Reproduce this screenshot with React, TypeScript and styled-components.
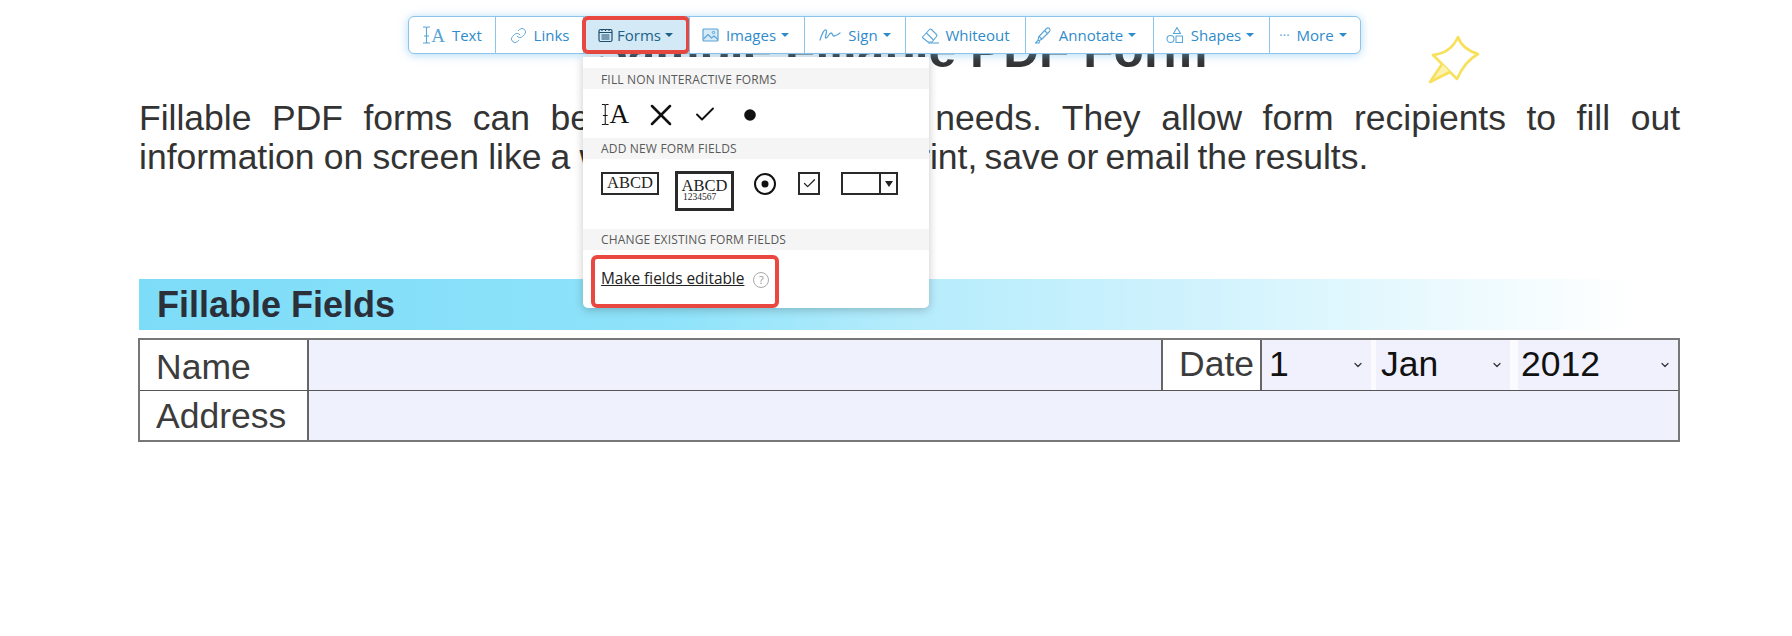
import React from "react";
import styled, { createGlobalStyle } from "styled-components";
import { Link, ChevronDown, Check, X } from "lucide-react";

const GlobalStyle = createGlobalStyle`
  html, body {
    margin: 0;
    background: #fff;
  }
  body {
    font-family: "Liberation Sans", Arial, sans-serif;
  }
`;

const Page = styled.div`
  position: relative;
  width: 1792px;
  height: 636px;
  overflow: hidden;
  box-sizing: border-box;
  padding: 23px 112px 0 139px;
  color: #333;
`;

const Title = styled.h1`
  margin: 0;
  padding-right: 17px;
  font-size: 49.7px;
  line-height: 54px;
  font-weight: bold;
  text-align: center;
`;

const Paragraph = styled.div`
  margin-top: 22px;
  font-size: 35.5px;
  line-height: 39px;
  word-spacing: -0.7px;
`;

const ParaLine = styled.div<{ $justify?: boolean }>`
  white-space: ${(p) => (p.$justify ? "normal" : "nowrap")};
  text-align: ${(p) => (p.$justify ? "justify" : "left")};
  text-align-last: ${(p) => (p.$justify ? "justify" : "left")};
`;

const TightWords = styled.span`
  word-spacing: -2.7px;
`;

const Banner = styled.div`
  margin-top: 102px;
  height: 51px;
  padding-left: 18px;
  display: flex;
  align-items: center;
  font-size: 36px;
  font-weight: bold;
  color: #2b2f3a;
  background: linear-gradient(90deg, #7ddcf8 0%, #8fe3fa 35%, #b5ecfc 50%, #d2f3fd 70%, #ffffff 97%);
`;

const FormTable = styled.div`
  margin: 8px 0 0 -1px;
  border: 2px solid #777;
  box-sizing: border-box;
  height: 104px;
  display: flex;
  flex-direction: column;
`;

const TableRow = styled.div<{ $first?: boolean }>`
  flex: 1;
  display: flex;
  min-height: 0;
  border-bottom: ${(p) => (p.$first ? "1px solid #555" : "none")};
`;

const Label = styled.div<{ $w: number; $top?: number }>`
  width: ${(p) => p.$w}px;
  flex: none;
  box-sizing: border-box;
  display: flex;
  align-items: center;
  padding: ${(p) => p.$top ?? 0}px 0 0 16px;
  font-size: 35.5px;
  color: #3c3c3c;
  background: #fff;
  border-right: 2px solid #666;
`;

const FieldFill = styled.div`
  flex: 1;
  background: #eff1fd;
  border-right: 2px solid #666;
  &:last-child {
    border-right: none;
  }
`;

const SelectBox = styled.div<{ $w: number; $pad: number }>`
  width: ${(p) => p.$w}px;
  flex: none;
  box-sizing: border-box;
  padding: 0 7px 0 ${(p) => p.$pad}px;
  display: flex;
  align-items: center;
  justify-content: space-between;
  font-size: 35.5px;
  color: #111;
  background: #f0f1fd;
  svg {
    color: #333;
  }
`;

const SelectGap = styled.div<{ $w: number }>`
  width: ${(p) => p.$w}px;
  flex: none;
  background: #fbfbff;
`;

const Toolbar = styled.div`
  position: absolute;
  left: 408px;
  top: 16px;
  width: 953px;
  height: 38px;
  box-sizing: border-box;
  display: flex;
  background: #fff;
  border: 1px solid #8cc4ea;
  border-radius: 6px;
  box-shadow: 0 1px 10px rgba(110, 185, 240, 0.55);
  font-family: "Open Sans", sans-serif;
  font-size: 15px;
  color: #2f8bcb;
`;

const ToolButton = styled.div<{ $w: number; $active?: boolean; $gap?: number; $pr?: number }>`
  position: relative;
  width: ${(p) => p.$w}px;
  flex: none;
  box-sizing: border-box;
  padding-right: ${(p) => p.$pr ?? 0}px;
  display: flex;
  align-items: center;
  justify-content: center;
  gap: ${(p) => p.$gap ?? 7}px;
  border-left: 1px solid #8cc4ea;
  background: ${(p) => (p.$active ? "#d3e9f6" : "transparent")};
  color: ${(p) => (p.$active ? "#1d6288" : "inherit")};
  &:first-child {
    border-left: none;
  }
  svg {
    flex: none;
    color: ${(p) => (p.$active ? "#1d4f6e" : "#5aa5d8")};
  }
`;

const RedOutline = styled.div`
  position: absolute;
  inset: -1px -1px -1px -2px;
  border: 4px solid #e8483f;
  border-radius: 6px;
  pointer-events: none;
`;

const Caret = styled.span<{ $ml: number }>`
  display: inline-block;
  margin-left: ${(p) => p.$ml}px;
  border-left: 4.5px solid transparent;
  border-right: 4.5px solid transparent;
  border-top: 4.5px solid currentColor;
`;

const ThinA = styled.span<{ $size: number }>`
  font-family: "Liberation Serif", serif;
  font-size: ${(p) => p.$size}px;
  line-height: 1;
`;

const IaIcon = styled.span`
  display: inline-flex;
  align-items: center;
  color: #5aa5d8;
`;

const MoreDots = styled.span`
  font-size: 13px;
  color: #5aa5d8;
`;

const Menu = styled.div`
  position: absolute;
  left: 583px;
  top: 57px;
  width: 346px;
  height: 251px;
  box-sizing: border-box;
  padding-top: 11px;
  background: #fff;
  border-radius: 0 0 5px 5px;
  box-shadow: 0 2px 10px rgba(0, 0, 0, 0.22);
  font-family: "Open Sans", sans-serif;
`;

const MenuHeader = styled.div<{ $lower?: boolean }>`
  height: 21px;
  box-sizing: border-box;
  padding: ${(p) => (p.$lower ? 1 : 0)}px 0 0 18px;
  display: flex;
  align-items: center;
  background: #f5f5f5;
  font-size: 12px;
  color: #595959;
  letter-spacing: 0.17px;
`;

const MarkRow = styled.div`
  height: 49px;
  box-sizing: border-box;
  padding: 2px 0 0 18px;
  display: flex;
  align-items: center;
  color: #111;
`;

const MarkSlot = styled.div<{ $w: number; $ml?: number }>`
  width: ${(p) => p.$w}px;
  margin-left: ${(p) => p.$ml ?? 0}px;
  flex: none;
  display: flex;
  align-items: center;
  justify-content: center;
`;

const FieldRow = styled.div`
  height: 70px;
  box-sizing: border-box;
  display: flex;
  align-items: flex-start;
  padding: 13px 0 0 18px;
  color: #111;
`;

const FieldBox = styled.div<{ $w: number; $h: number; $ml: number; $bold?: boolean }>`
  width: ${(p) => p.$w}px;
  height: ${(p) => p.$h}px;
  margin-left: ${(p) => p.$ml}px;
  margin-top: ${(p) => (p.$bold ? -1 : 0)}px;
  padding-top: ${(p) => (p.$bold ? 3 : 0)}px;
  flex: none;
  box-sizing: border-box;
  border: ${(p) => (p.$bold ? 3 : 2)}px solid #2a2a2a;
  font-family: "Liberation Serif", serif;
  color: #222;
  display: flex;
  flex-direction: column;
  align-items: center;
  svg {
    margin-top: 2px;
  }
`;

const AbcdText = styled.span`
  font-size: 16.5px;
  line-height: 18px;
`;

const DigitText = styled.span`
  font-size: 9.5px;
  line-height: 8px;
  align-self: flex-start;
  margin: -2px 0 0 5px;
`;

const ComboBox = styled.div`
  margin-left: 21px;
  width: 57px;
  height: 23px;
  box-sizing: border-box;
  border: 2px solid #2a2a2a;
  display: flex;
  justify-content: flex-end;
`;

const ComboArrow = styled.div`
  width: 15px;
  border-left: 2px solid #2a2a2a;
  display: flex;
  align-items: center;
  justify-content: center;
  &::after {
    content: "";
    border-left: 4px solid transparent;
    border-right: 4px solid transparent;
    border-top: 6px solid #222;
  }
`;

const LinkRow = styled.div`
  height: 59px;
  box-sizing: border-box;
  padding: 19px 0 0 18px;
  display: flex;
  align-items: flex-start;
  gap: 9px;
  font-size: 15.4px;
  line-height: 20px;
  color: #222;
`;

const EditLink = styled.span`
  text-decoration: underline;
`;

const HelpMark = styled.span`
  width: 14px;
  height: 14px;
  margin-top: 3px;
  border: 1px solid #aaa;
  border-radius: 50%;
  font-size: 11px;
  line-height: 14px;
  text-align: center;
  color: #999;
`;

const LinkOutline = styled.div`
  position: absolute;
  left: 8px;
  top: 198px;
  width: 188px;
  height: 53px;
  box-sizing: border-box;
  border: 4px solid #e8483f;
  border-radius: 6px;
`;

const PinMark = styled.svg`
  position: absolute;
  left: 1415px;
  top: 25px;
`;

function IBeam({ h }: { h: number }) {
  return (
    <svg width="9" height={h} viewBox={`0 0 9 ${h}`} fill="none" stroke="currentColor" strokeWidth="1.1">
      <path d={`M1 1h2.5q1 0 1 1.5V${h - 2.5}q0 1.5-1 1.5H1M8 1H5.5q-1 0-1 1.5M8 ${h - 1}H5.5q-1 0-1-1.5M2 ${h / 2 + 1}h5`} />
    </svg>
  );
}

function FormsIcon() {
  return (
    <svg width="15" height="15" viewBox="0 0 15 15" fill="none" stroke="currentColor" strokeWidth="1.2">
      <rect x="1" y="1.5" width="13" height="12" rx="1.5" />
      <path d="M1 4.5h13M3.5 7h8M3.5 9h8M3.5 11h8" />
      <path d="M4 1v2M7.5 1v2M11 1v2" />
    </svg>
  );
}

function ImagesIcon() {
  return (
    <svg width="17" height="14" viewBox="0 0 17 14" fill="#d6eaf8" stroke="currentColor" strokeWidth="1.2">
      <rect x="1" y="1" width="15" height="12" rx="1" />
      <path d="M1.5 11 6 6.5 9.5 10l2.5-2 4 3.5" fill="none" />
      <circle cx="11.5" cy="4.5" r="1.2" fill="none" strokeWidth="1" />
    </svg>
  );
}

function SignIcon() {
  return (
    <svg width="22" height="14" viewBox="0 0 22 14" fill="none" stroke="currentColor" strokeWidth="1.3" strokeLinecap="round">
      <path d="M1 12C3 6 5 1 7 2c2 1-2 8 0 8s3-5 5-5 1 3 3 3 3-1 6-3" />
    </svg>
  );
}

function EraserIcon() {
  return (
    <svg width="19" height="17" viewBox="0 0 19 17" fill="none" stroke="currentColor" strokeWidth="1.1" strokeLinejoin="round">
      <path d="M2 9.5 8.5 2.5q1-1 2 0l5 5q1 1 0 2L11 15H7L2 11q-.8-.8 0-1.5Z" />
      <path d="M5.5 6 12.5 13" />
      <path d="M7 16h11" />
    </svg>
  );
}

function MarkerIcon() {
  return (
    <svg width="18" height="18" viewBox="0 0 18 18" fill="none" stroke="currentColor" strokeWidth="1.1" strokeLinejoin="round">
      <path d="M5 10.5 12.5 2.5q1.5-1.3 3 0 1.3 1.5 0 3L8 13Z" />
      <path d="M5 10.5 4 14l1 .8L8 13" />
      <path d="M4 14.5 1.5 17H5l.8-1.8" />
      <path d="M10.5 4.5l3.5 3.5" />
    </svg>
  );
}

function ShapesIcon() {
  return (
    <svg width="18" height="18" viewBox="0 0 18 18" fill="none" stroke="currentColor" strokeWidth="1.1" strokeLinejoin="round">
      <path d="M11 1.5 14.5 7.5H7.5Z" />
      <circle cx="4.5" cy="13" r="3.5" />
      <rect x="10" y="10" width="6.5" height="6.5" />
    </svg>
  );
}

const tools = [
  { label: "Links", w: 88, icon: <Link size={17} strokeWidth={1.3} /> },
  { label: "Forms", w: 106, icon: <FormsIcon />, caret: true, active: true, gap: 4, pr: 2, caretGap: 0 },
  { label: "Images", w: 115, icon: <ImagesIcon />, caret: true, pr: 3 },
  { label: "Sign", w: 101, icon: <SignIcon />, caret: true },
  { label: "Whiteout", w: 120, icon: <EraserIcon />, gap: 5 },
  { label: "Annotate", w: 128, icon: <MarkerIcon />, caret: true, pr: 9 },
  { label: "Shapes", w: 116, icon: <ShapesIcon />, caret: true, pr: 3 },
];

export default function App() {
  return (
    <>
      <GlobalStyle />
      <Page>
        <Title>Sample Fillable PDF Form</Title>
        <Paragraph>
          <ParaLine $justify>
            Fillable PDF forms can be made to suit your needs. They allow form recipients to fill out
          </ParaLine>
          <ParaLine>
            information on screen like a web page, and then print<TightWords>, save or email the results.</TightWords>
          </ParaLine>
        </Paragraph>
        <Banner>Fillable Fields</Banner>
        <FormTable>
          <TableRow $first>
            <Label $w={169} $top={5}>Name</Label>
            <FieldFill />
            <Label $w={99}>Date</Label>
            <SelectBox $w={109} $pad={7}>
              1
              <ChevronDown size={12} strokeWidth={2.4} />
            </SelectBox>
            <SelectGap $w={5} />
            <SelectBox $w={134} $pad={5}>
              Jan
              <ChevronDown size={12} strokeWidth={2.4} />
            </SelectBox>
            <SelectGap $w={8} />
            <SelectBox $w={160} $pad={3}>
              2012
              <ChevronDown size={12} strokeWidth={2.4} />
            </SelectBox>
          </TableRow>
          <TableRow>
            <Label $w={169} $top={2}>Address</Label>
            <FieldFill />
          </TableRow>
        </FormTable>

        <Toolbar>
          <ToolButton $w={86}>
            <IaIcon>
              <IBeam h={18} />
              <ThinA $size={19}>A</ThinA>
            </IaIcon>
            Text
          </ToolButton>
          {tools.map((t) => (
            <ToolButton key={t.label} $w={t.w} $active={t.active} $gap={t.gap} $pr={t.pr}>
              {t.icon}
              {t.label}
              {t.caret && <Caret $ml={t.caretGap ?? -2} />}
              {t.active && <RedOutline />}
            </ToolButton>
          ))}
          <ToolButton $w={91} $pr={4}>
            <MoreDots>···</MoreDots>
            More
            <Caret $ml={-2} />
          </ToolButton>
        </Toolbar>

        <Menu>
          <MenuHeader $lower>FILL NON INTERACTIVE FORMS</MenuHeader>
          <MarkRow>
            <MarkSlot $w={28}>
              <IBeam h={23} />
              <ThinA $size={27}>A</ThinA>
            </MarkSlot>
            <MarkSlot $w={64}>
              <X size={36} strokeWidth={1.7} />
            </MarkSlot>
            <MarkSlot $w={24}>
              <Check size={33} strokeWidth={1.9} />
            </MarkSlot>
            <MarkSlot $w={66}>
              <svg width="12" height="12" viewBox="0 0 12 12">
                <circle cx="6" cy="6" r="5.8" fill="currentColor" />
              </svg>
            </MarkSlot>
          </MarkRow>
          <MenuHeader>ADD NEW FORM FIELDS</MenuHeader>
          <FieldRow>
            <FieldBox $w={58} $h={23} $ml={0}>
              <AbcdText>ABCD</AbcdText>
            </FieldBox>
            <FieldBox $w={59} $h={40} $ml={16} $bold>
              <AbcdText>ABCD</AbcdText>
              <DigitText>1234567</DigitText>
            </FieldBox>
            <MarkSlot $w={24} $ml={19}>
              <svg width="24" height="24" viewBox="0 0 24 24">
                <circle cx="12" cy="12" r="10" fill="none" stroke="#111" strokeWidth="2" />
                <circle cx="12" cy="12" r="3.5" fill="#111" />
              </svg>
            </MarkSlot>
            <FieldBox $w={22} $h={23} $ml={21}>
              <Check size={15} strokeWidth={2} />
            </FieldBox>
            <ComboBox>
              <ComboArrow />
            </ComboBox>
          </FieldRow>
          <MenuHeader>CHANGE EXISTING FORM FIELDS</MenuHeader>
          <LinkRow>
            <EditLink>Make fields editable</EditLink>
            <HelpMark>?</HelpMark>
          </LinkRow>
          <LinkOutline />
        </Menu>

        <PinMark width="80" height="65" viewBox="0 0 80 65" fill="none" stroke="#f8e05a" strokeWidth="2.6" strokeLinejoin="round">
          <path d="M43 12Q47 24 63 29 50 36 42 54L18 30Q36 28 43 12Z" />
          <path d="M27 39 15 57 35 47" fill="#fdf3b0" />
        </PinMark>
      </Page>
    </>
  );
}
